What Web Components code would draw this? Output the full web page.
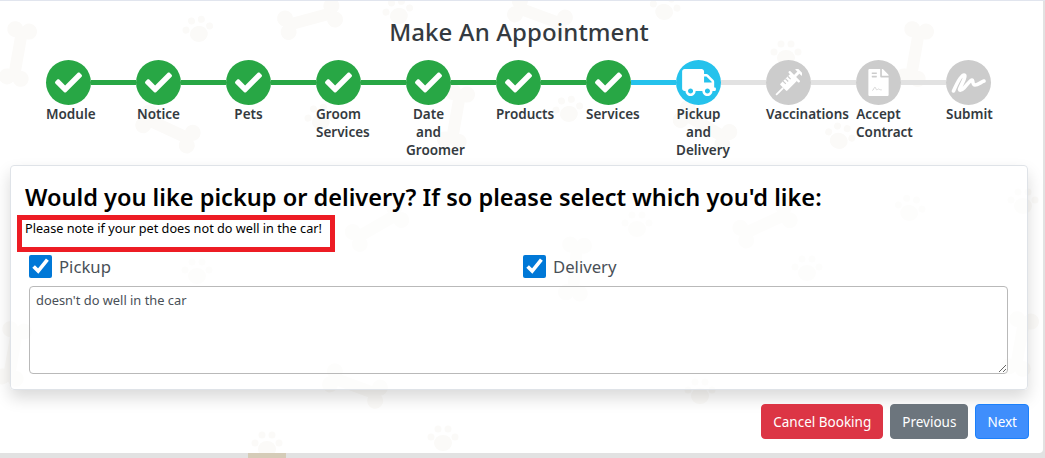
<!DOCTYPE html>
<html>
<head>
<meta charset="utf-8">
<title>Make An Appointment</title>
<style>
    html, body { margin: 0; height: 100%; overflow: hidden; }
    html { background: linear-gradient(#d5ccb8, #d5ccb8) 248px 453px / 38px 5px no-repeat, linear-gradient(#e1e5ee, #e1e5ee) 0 0 / 100% 1px no-repeat, #e2e2e2; }
    body { font-family: "Noto Sans", "Open Sans", sans-serif; }
</style>
</head>
<body>
<booking-page>
    <paw-backdrop></paw-backdrop>
    <h-title slot="title">Make An Appointment</h-title>
    <step-bar slot="steps">
        <step-item state="done">Module</step-item>
        <step-item state="done">Notice</step-item>
        <step-item state="done">Pets</step-item>
        <step-item state="done">Groom Services</step-item>
        <step-item state="done">Date and Groomer</step-item>
        <step-item state="done">Products</step-item>
        <step-item state="done" next="current">Services</step-item>
        <step-item state="current" icon="truck">Pickup and Delivery</step-item>
        <step-item state="todo" icon="syringe">Vaccinations</step-item>
        <step-item state="todo" icon="contract">Accept Contract</step-item>
        <step-item state="todo" icon="signature" last>Submit</step-item>
    </step-bar>
    <question-card slot="card" heading="Would you like pickup or delivery? If so please select which you'd like:" note="Please note if your pet does not do well in the car!">
        <check-field>Pickup</check-field>
        <check-field>Delivery</check-field>
        <textarea slot="notes" aria-label="Notes">doesn't do well in the car</textarea>
    </question-card>
    <wizard-button slot="actions" kind="danger">Cancel Booking</wizard-button>
    <wizard-button slot="actions" kind="secondary">Previous</wizard-button>
    <wizard-button slot="actions" kind="primary">Next</wizard-button>
</booking-page>

<script>
const ICONS = {
    check: `<svg viewBox="0 0 512 512" width="27" height="27"><path fill="#fff" d="M173.9 439.4l-166.4-166.4c-10-10-10-26.2 0-36.2l36.2-36.2c10-10 26.2-10 36.2 0L192 312.7 432.1 72.6c10-10 26.2-10 36.2 0l36.2 36.2c10 10 10 26.2 0 36.2l-294.4 294.4c-10 10-26.2 10-36.2 0z"/></svg>`,
    truck: `<svg viewBox="0 0 640 512" width="34" height="27"><path fill="#fff" d="M624 352h-16V243.9c0-12.7-5.1-24.9-14.1-33.9L494 110.1c-9-9-21.2-14.1-33.9-14.1H416V48c0-26.5-21.5-48-48-48H48C21.5 0 0 21.5 0 48v320c0 26.5 21.5 48 48 48h16c0 53 43 96 96 96s96-43 96-96h128c0 53 43 96 96 96s96-43 96-96h48c8.8 0 16-7.2 16-16v-32c0-8.8-7.2-16-16-16zM160 464c-26.5 0-48-21.5-48-48s21.5-48 48-48 48 21.5 48 48-21.5 48-48 48zm320 0c-26.5 0-48-21.5-48-48s21.5-48 48-48 48 21.5 48 48-21.5 48-48 48zm80-208H416V144h44.1l99.9 99.9V256z"/></svg>`,
    syringe: `<svg viewBox="0 0 27 27" width="27" height="27"><g transform="rotate(45 13.5 13.5)" fill="#fff"><rect x="8.6" y="6" width="9.8" height="15" rx="1"/><rect x="12.6" y="21" width="1.8" height="10"/><rect x="12" y="-1" width="3" height="7"/><rect x="8.8" y="-3" width="9.4" height="2.6" rx="1"/><rect x="6" y="4.2" width="15" height="2.4" rx="1"/><g fill="#ccc"><rect x="8.6" y="9" width="4" height="1.2"/><rect x="8.6" y="12.4" width="4" height="1.2"/><rect x="8.6" y="15.8" width="4" height="1.2"/></g></g></svg>`,
    contract: `<svg viewBox="0 0 384 512" width="21" height="27"><path fill="#fff" d="M224 136V0H24C10.7 0 0 10.7 0 24v464c0 13.3 10.7 24 24 24h336c13.3 0 24-10.7 24-24V160H248c-13.2 0-24-10.8-24-24zM64 72c0-4.400 3.600-8 8-8h80c4.400 0 8 3.600 8 8v16c0 4.400-3.600 8-8 8H72c-4.400 0-8-3.600-8-8V72zm0 64c0-4.400 3.600-8 8-8h80c4.400 0 8 3.600 8 8v16c0 4.400-3.600 8-8 8H72c-4.400 0-8-3.600-8-8v-16zM377 105L279.100 7c-4.500-4.500-10.600-7-17-7H256v128h128v-6.100c0-6.300-2.500-12.400-7-16.900z"/><path fill="none" stroke="#ccc" stroke-width="14" d="M72 408c30 0 30-62 52-62s12 48 34 48 20-20 36-14 22 16 60 16"/></svg>`,
    signature: `<svg viewBox="0 0 35 22" width="35" height="22"><path fill="none" stroke="#fff" stroke-width="3.600" stroke-linecap="round" stroke-linejoin="round" d="M2.500 19C6 11 10 3 13 3c2.500 0-1 7-4 13-1.500 3 1 3 4 0s6-8 8-8c1.500 0 0 5 3 5s6-3 9-4"/></svg>`
};

class BookingPage extends HTMLElement {
    constructor() {
        super();
        this.attachShadow({mode: 'open'}).innerHTML = `
            <style>
                :host { display: flex; flex-direction: column; position: relative; box-sizing: border-box; width: 1043px; height: 452px; margin-top: 1px; padding: 0 15px 0 10px; background: #fff; border-radius: 0 0 4px 0; overflow: hidden; }
                .title { display: flex; justify-content: center; padding: 13px 0 10px; position: relative; }
                .steps { display: block; position: relative; height: 105px; padding-left: 36px; }
                .card { display: block; position: relative; }
                .actions { display: flex; justify-content: flex-end; gap: 7px; margin: 14px -1px 0 0; position: relative; }
            </style>
            <slot></slot>
            <div class="title"><slot name="title"></slot></div>
            <div class="steps"><slot name="steps"></slot></div>
            <div class="card"><slot name="card"></slot></div>
            <div class="actions"><slot name="actions"></slot></div>
        `;
    }
}

class HTitle extends HTMLElement {
    constructor() {
        super();
        this.attachShadow({mode: 'open'}).innerHTML = `
            <style>:host { display: block; font-size: 24px; line-height: 36px; font-weight: 500; color: #343a40; letter-spacing: .1px; }</style>
            <slot></slot>
        `;
    }
}

class PawBackdrop extends HTMLElement {
    constructor() {
        super();
        const bones = [[18, 53, 100], [310, 18, -15], [168, 128, 25], [456, 116, 100], [540, 15, 20], [705, 125, 30], [915, 53, 100], [765, 223, -25], [355, 385, 20], [377, 225, -30], [575, 268, 95], [1020, 343, 100], [13, 353, 100]];
        const paws = [[198, 28, -10], [398, 10, -10], [665, 6, 10], [786, 52, 0], [568, 108, -10], [320, 116, -10], [840, 135, 15], [197, 270, 0], [910, 207, 10], [267, 443, 0], [443, 437, 0], [700, 390, 0], [637, 223, 0], [807, 267, 0], [1023, 200, 0]];
        const bone = ([x, y, r]) => `<g transform="translate(${x} ${y}) rotate(${r})"><rect x="-22" y="-6" width="44" height="12"/><circle cx="-24" cy="-7" r="8"/><circle cx="-24" cy="7" r="8"/><circle cx="24" cy="-7" r="8"/><circle cx="24" cy="7" r="8"/></g>`;
        const paw = ([x, y, r]) => `<g transform="translate(${x} ${y}) rotate(${r})"><ellipse cx="0" cy="5" rx="9" ry="8"/><circle cx="-12" cy="-1" r="3.500"/><circle cx="-5" cy="-9" r="3.500"/><circle cx="5" cy="-9" r="3.500"/><circle cx="12" cy="-1" r="3.500"/></g>`;
        this.attachShadow({mode: 'open'}).innerHTML = `
            <style>
                :host { display: block; position: absolute; inset: 0; }
                svg { display: block; }
            </style>
            <svg width="1043" height="452" fill="#fbfaf8">${bones.map(bone).join('')}${paws.map(paw).join('')}</svg>
        `;
    }
}

class StepBar extends HTMLElement {
    constructor() {
        super();
        this.attachShadow({mode: 'open'}).innerHTML = `
            <style>:host { display: flex; }</style>
            <slot></slot>
        `;
    }
}

class StepItem extends HTMLElement {
    constructor() {
        super();
        this.attachShadow({mode: 'open'});
    }
    connectedCallback() {
        const state = this.getAttribute('state');
        const colors = {done: '#28a745', current: '#25c2ec', todo: '#cccccc'};
        const lines = {done: '#28a745', current: '#e2e2e2', todo: '#e2e2e2'};
        const line = this.getAttribute('next') == 'current' ? colors.current : lines[state];
        const icon = ICONS[this.getAttribute('icon') || 'check'];
        this.shadowRoot.innerHTML = `
            <style>
                :host { display: grid; grid-template-columns: 45px 45px; grid-template-rows: 45px auto; flex: none; align-items: center; }
                .dot { width: 45px; height: 45px; border-radius: 50%; display: flex; align-items: center; justify-content: center; background: ${colors[state]}; }
                svg { display: block; }
                .line { height: 5px; background: ${line}; ${this.hasAttribute('last') ? 'visibility: hidden;' : ''} }
                .label { width: 45px; grid-column: 1; text-align: center; font-size: 13.5px; line-height: 18px; font-weight: 600; color: #343a40; align-self: start; }
            </style>
            <div class="dot">${icon}</div>
            <div class="line"></div>
            <div class="label"><slot></slot></div>
        `;
    }
}

class QuestionCard extends HTMLElement {
    constructor() {
        super();
        this.attachShadow({mode: 'open'});
    }
    connectedCallback() {
        this.shadowRoot.innerHTML = `
            <style>
                :host { display: block; box-sizing: border-box; height: 225px; padding: 15px 20px 0 14px; background: rgba(255,255,255,.6); border: 1px solid #dfe3e8; border-radius: 4px; box-shadow: 0 8px 16px rgba(0,0,0,.15); }
                h4 { margin: 0; font-size: 23.560px; line-height: 32px; font-weight: 600; color: #000; }
                p { margin: 5px 0 0; font-size: 12.700px; line-height: 18px; color: #000; position: relative; top: 1px; }
                .mark { position: absolute; left: 7px; top: 50px; width: 318px; height: 37px; box-sizing: border-box; border: 5px solid #ed1c24; pointer-events: none; }
                .checks { display: grid; grid-template-columns: 494px 1fr; margin: 19px 0 8px 4px; }
                ::slotted(textarea) { display: block; box-sizing: border-box; width: 979px; height: 88px; margin-left: 4px; padding: 3px 6px; border: 1px solid #b9b9b9; border-radius: 4px; background: transparent; font: 12.850px/21px "Noto Sans", sans-serif; color: #495057; }
            </style>
            <h4>${this.getAttribute('heading')}</h4>
            <p>${this.getAttribute('note')}</p>
            <div class="mark"></div>
            <div class="checks"><slot></slot></div>
            <slot name="notes"></slot>
        `;
    }
}

class CheckField extends HTMLElement {
    constructor() {
        super();
        this.attachShadow({mode: 'open'}).innerHTML = `
            <style>
                :host { display: block; }
                label { display: flex; align-items: center; gap: 7px; height: 23px; font-size: 16.700px; line-height: 21px; color: #495057; }
                label ::slotted(*) { display: inline; }
                input { width: 23px; height: 23px; margin: 0; accent-color: #0078d7; }
            </style>
            <label><input type="checkbox" checked><slot></slot></label>
        `;
    }
}

class WizardButton extends HTMLElement {
    constructor() {
        super();
        this.attachShadow({mode: 'open'});
    }
    connectedCallback() {
        const kinds = {
            danger: 'background: #dc3545; border-color: #dc3545;',
            secondary: 'background: #6c757d; border-color: #6c757d;',
            primary: 'background: #3f8efc; border-color: #1b80fb;',
        };
        this.shadowRoot.innerHTML = `
            <style>
                :host { display: block; }
                button { display: block; box-sizing: border-box; height: 35px; padding: 0 11px; border: 1px solid; border-radius: 4px; font: 13.5px "Noto Sans", sans-serif; color: #fff; ${kinds[this.getAttribute('kind')]} }
            </style>
            <button type="button"><slot></slot></button>
        `;
    }
}

customElements.define('booking-page', BookingPage);
customElements.define('h-title', HTitle);
customElements.define('paw-backdrop', PawBackdrop);
customElements.define('step-bar', StepBar);
customElements.define('step-item', StepItem);
customElements.define('question-card', QuestionCard);
customElements.define('check-field', CheckField);
customElements.define('wizard-button', WizardButton);
</script>
</body>
</html>
